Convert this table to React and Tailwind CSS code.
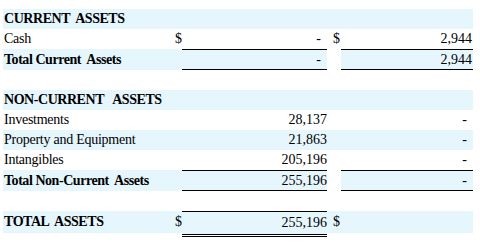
import React from "react";

const LIGHT = "bg-[#e5f6fd]";

function Row({ label, bold, shade, b, c, d, e, cDash, eDash, total }) {
  const bg = shade ? LIGHT : "";
  const h = total ? "h-[21px] leading-[19px]" : "h-[20px] leading-[20px]";
  const hPlain = total ? "h-[21px] leading-[21px]" : "h-[20px] leading-[20px]";
  const brd = total ? "border-y border-black" : "";
  return (
    <div className="flex">
      <div className={`w-[167px] pl-[1px] whitespace-pre ${hPlain} ${bg} ${bold ? "font-bold tracking-[-0.45px]" : "tracking-[-0.25px]"}`}>{label}</div>
      <div className={`w-[12px] text-right ${hPlain} ${bg}`}>{b}</div>
      <div className={`w-[145px] text-right ${cDash ? "pr-[6px]" : "pr-0"} ${h} ${bg} ${brd}`}>{c}</div>
      <div className={`w-[14px] text-right pr-[1px] ${hPlain} ${total ? "" : bg}`}>{d}</div>
      <div className={`w-[132px] text-right ${eDash ? "pr-[6px]" : "pr-[1px]"} ${h} ${bg} ${brd}`}>{e}</div>
    </div>
  );
}

export default function App() {
  return (
    <div className="w-[480px] h-[244px] bg-white text-[14px] text-black font-['Liberation_Serif','Times_New_Roman',serif]">
      <div className="pt-[9px] pl-[3px]">
        <Row label={"CURRENT  ASSETS"} bold shade />
        <Row label="Cash" b="$" c="-" cDash d="$" e="2,944" />
        <Row label={"Total Current  Assets"} bold shade total c="-" cDash e="2,944" />
        <Row label="" />
        <Row label={"NON-CURRENT   ASSETS"} bold shade />
        <Row label="Investments" c="28,137" e="-" eDash />
        <Row label="Property and Equipment" shade c="21,863" e="-" eDash />
        <Row label="Intangibles" c="205,196" e="-" eDash />
        <Row label={"Total Non-Current  Assets"} bold shade total c="255,196" e="-" eDash />
        <Row label="" />
        <div className="flex items-start">
          <div className={`w-[167px] pl-[1px] h-[22px] leading-[22px] font-bold tracking-[-0.45px] whitespace-pre ${LIGHT}`}>{"TOTAL  ASSETS"}</div>
          <div className={`w-[12px] text-right h-[22px] leading-[22px] ${LIGHT}`}>$</div>
          <div className={`w-[145px] text-right h-[26px] leading-[21px] border-t border-b-[3px] border-double border-black bg-clip-padding ${LIGHT}`}>
            255,196
          </div>
          <div className={`w-[14px] text-right pr-[1px] h-[22px] leading-[22px] ${LIGHT}`}>$</div>
          <div className={`w-[132px] h-[22px] ${LIGHT}`}></div>
        </div>
      </div>
    </div>
  );
}
